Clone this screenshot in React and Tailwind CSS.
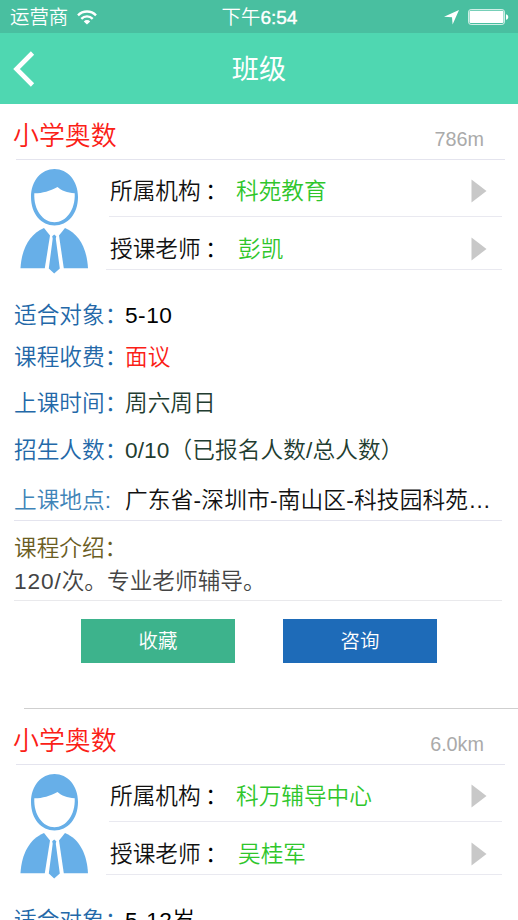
const courses = [
  {
    id: 1,
    name: '小学奥数',
    distance: '786m',
    org: '科苑教育',
    teacher: '彭凯',
    target: '5-10',
    price: '面议',
    time: '周六周日',
    count: '0/10（已报名人数/总人数）',
    address: '广东省-深圳市-南山区-科技园科苑…',
    intro: ['120/', '次。专业老师辅导。'],
  },
  {
    id: 2,
    name: '小学奥数',
    distance: '6.0km',
    org: '科万辅导中心',
    teacher: '吴桂军',
    target: '5-12岁',
  },
]

function StatusBar() {
  return (
    <div className="grid h-[33px] grid-cols-3 items-center bg-[#49bfa0] pl-[10px] pr-[9px] text-[19.4px] leading-[33px] text-white">
      <div className="flex items-center gap-[9px]">
        <span className="pt-px font-[350]">运营商</span>
        <svg width="20" height="15" viewBox="0 0 20 15" fill="none" stroke="white" strokeWidth="2.4">
          <path d="M1 5.3a12.7 12.7 0 0 1 18 0" />
          <path d="M4.3 8.8a8 8 0 0 1 11.4 0" />
          <path d="M10 14.6l-3.2-3.2a4.5 4.5 0 0 1 6.4 0z" fill="white" stroke="none" />
        </svg>
      </div>
      <div className="text-center">
        <span className="font-[350]">下午</span>
        <span className="text-[19px] [-webkit-text-stroke:0.4px_white]">6:54</span>
      </div>
      <div className="flex items-center justify-end gap-[9px]">
        <svg width="15" height="15" viewBox="0 0 15 15" fill="white">
          <path d="M15 0L8.6 14.6L8 7.2L0 6.8z" />
        </svg>
        <svg width="41" height="16" viewBox="0 0 41 16" fill="white">
          <rect x="0.5" y="0.5" width="36" height="15" rx="2.6" fill="none" stroke="white" strokeOpacity="0.75" />
          <rect x="1.5" y="1.7" width="34" height="12.3" rx="1.2" />
          <path d="M38 5.2c3 .6 3 5 0 5.6z" />
        </svg>
      </div>
    </div>
  )
}

function NavBar() {
  return (
    <header className="grid h-[71px] grid-cols-[60px_1fr_60px] items-center bg-[#4fd7b1] text-white">
      <button aria-label="返回" className="pl-[13px]">
        <svg width="22" height="36" viewBox="0 0 22 36" fill="none" stroke="white" strokeWidth="4.6">
          <path d="M19.5 2L3.5 18L19.5 34" />
        </svg>
      </button>
      <h1 className="pt-[3px] text-center text-[27.2px] leading-[68px]">班级</h1>
    </header>
  )
}

function Avatar() {
  return (
    <svg width="70" height="106" viewBox="0 0 70 106" fill="#67afe8">
      <path fillRule="evenodd" d="M34.500 0C47.500 0 58 11.500 58 28C58 45 47.500 56.500 34.500 56.500S11 45 11 28C11 11.500 21.500 0 34.500 0zM14.300 24.300C13.500 41 23 53.300 34.500 53.300S55.500 41 54.700 24.300C47 23.800 41.500 21.500 37.500 18C29.500 22 23 24.300 14.300 24.300z" />
      <path d="M24 59L30 66.500L24.800 99.300H0.500C1.500 80 9.500 65 24 59z" />
      <path d="M45 59L39 66.500L43.800 99.300H68C67 80 59.500 65 45 59z" />
      <path d="M32.200 67.300L34.200 65.500L36.300 67.300L35.800 69.700L39.800 99.500L34.200 104.500L28.800 99.500L32.700 69.700z" />
    </svg>
  )
}

function LinkRow({ label, value, className, gap }) {
  return (
    <div className={`flex items-center border-b border-[#e9e9f0] ${className}`}>
      <span className="w-[91px] text-[#111]">{label}</span>
      <span className={gap}>：</span>
      <span className="flex-1 text-[#2fc62b]">{value}</span>
      <svg width="16" height="24" viewBox="0 0 16 24" fill="#c8c8c8" className="mr-[15px]">
        <path d="M0.500 0.500L15.500 12L0.500 23.500z" />
      </svg>
    </div>
  )
}

function InfoRow({ label, value, height, labelColor = 'text-[#2368a8]', valueColor, colon = '：' }) {
  return (
    <div className={`flex items-center ${height}`}>
      <span className={`w-[111px] shrink-0 whitespace-nowrap ${labelColor}`}>
        {label}
        <span className="tracking-[-4px]">{colon}</span>
      </span>
      <span className={`whitespace-nowrap ${valueColor}`}>{value}</span>
    </div>
  )
}

function CourseCard({ course }) {
  return (
    <section className="h-[605px] pl-[14px] pr-4 text-[22.66px] font-[350] leading-[30px]">
      <div className="-mr-[3px] ml-[2px] flex h-[56px] items-center justify-between border-b border-[#e4e4ee] pt-[8px]">
        <h2 className="-ml-[3px] text-[25.9px] text-[#fb2016]">{course.name}</h2>
        <span className="mr-[21px] pt-[6px] text-[19.8px] text-[#aaa]">{course.distance}</span>
      </div>
      <div className="flex h-[128px]">
        <div className="w-[92px] pl-[6px] pt-[9px]">
          <Avatar />
        </div>
        <div className="flex-1">
          <LinkRow label="所属机构" value={course.org} gap="ml-[4px] w-[31px]" className="ml-[3px] h-[57px] pl-px pt-[6px]" />
          <LinkRow label="授课老师" value={course.teacher} gap="ml-[4px] w-[33px]" className="h-[53px] pl-[4px] pt-[12px]" />
        </div>
      </div>
      <div className="pt-[5px]">
        <InfoRow height="h-[43px]" label="适合对象" value={course.target} valueColor="text-black tracking-[0.5px]" />
        {course.price && (
          <>
            <InfoRow height="h-[42px]" label="课程收费" value={course.price} valueColor="text-[#fb2016]" />
            <InfoRow height="h-[50px]" label="上课时间" value={course.time} valueColor="text-[#223c30]" />
            <InfoRow height="h-[44px]" label="招生人数" value={course.count} valueColor="text-[#223c30] tracking-[0.1px]" />
            <InfoRow
              height="h-[49px] border-b border-[#e4e4ee] pt-[7px]"
              label="上课地点"
              value={course.address}
              labelColor="text-[#3f84b8]"
              valueColor="text-[#111] tracking-[0.2px]"
              colon=":"
            />
          </>
        )}
      </div>
      {course.intro && (
        <>
          <div className="h-[80px] border-b border-[#e9e9ec] pt-[12px]">
            <h3 className="h-[33px] text-[#6b5d1f]">课程介绍：</h3>
            <p className="text-[#444]">
              <span className="tracking-[0.9px]">{course.intro[0]}</span>
              {course.intro[1]}
            </p>
          </div>
          <div className="ml-[67px] mt-[18px] flex gap-12 text-[19.4px] text-white">
            <button className="h-[44px] w-[154px] bg-[#3db38c]">收藏</button>
            <button className="h-[44px] w-[154px] bg-[#1e6bb8]">咨询</button>
          </div>
          <div className="-mr-4 ml-[10px] mt-[45px] border-b border-[#cfcfcf]"></div>
        </>
      )}
    </section>
  )
}

function App() {
  return (
    <div className="h-[920px] w-[518px] overflow-hidden bg-white font-['Liberation_Sans','Noto_Sans_CJK_SC',sans-serif]">
      <StatusBar />
      <NavBar />
      {courses.map((course) => (
        <CourseCard key={course.id} course={course} />
      ))}
    </div>
  )
}

export default App
